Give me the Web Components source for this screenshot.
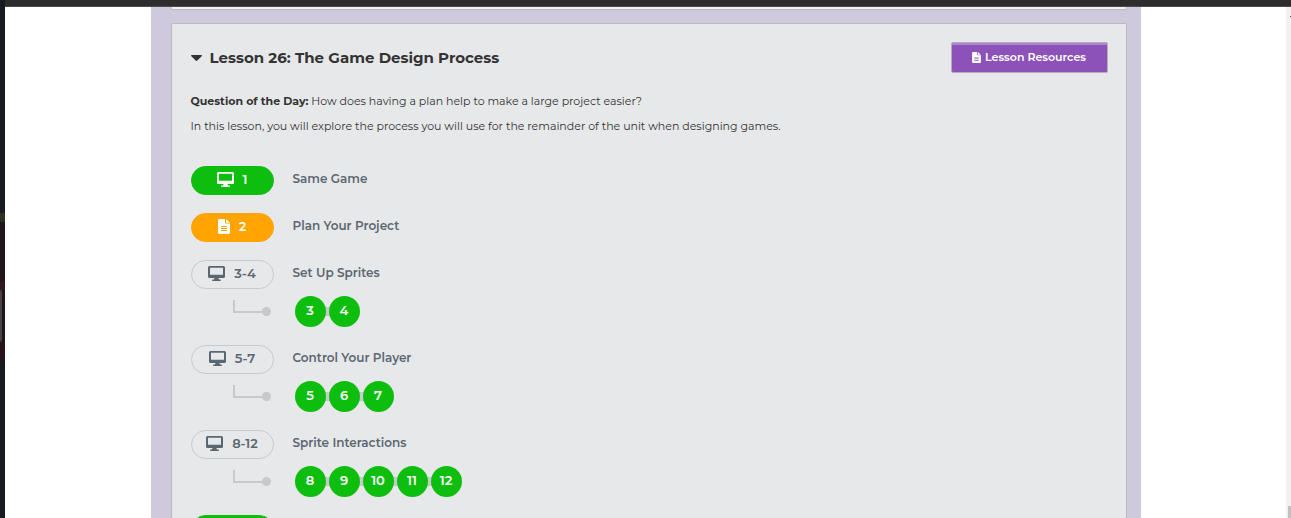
<!DOCTYPE html>
<html lang="en">
<head>
<meta charset="utf-8">
<title>Lesson 26: The Game Design Process</title>
<style>
html, body { margin: 0; height: 100%; overflow: hidden; }
body { --face: Montserrat, Inter, sans-serif; font-family: var(--face); color: #333; background: #fff; }
</style>
</head>
<body>
<course-window>
  <lesson-card partial></lesson-card>
  <lesson-card heading="Lesson 26: The Game Design Process">
    <p><strong>Question of the Day:</strong> How does having a plan help to make a large project easier?</p>
    <p>In this lesson, you will explore the process you will use for the remainder of the unit when designing games.</p>
    <level-row slot="levels" label="1" state="perfect" icon="screen" name="Same Game"></level-row>
    <level-row slot="levels" label="2" state="review" icon="page" name="Plan Your Project"></level-row>
    <level-row slot="levels" label="3-4" icon="screen" name="Set Up Sprites" bubbles="3 4"></level-row>
    <level-row slot="levels" label="5-7" icon="screen" name="Control Your Player" bubbles="5 6 7"></level-row>
    <level-row slot="levels" label="8-12" icon="screen" name="Sprite Interactions" bubbles="8 9 10 11 12"></level-row>
    <level-row slot="levels" state="perfect"></level-row>
  </lesson-card>
</course-window>

<script>
const define = (name, cls) => customElements.define(name, cls);

define('course-window', class extends HTMLElement {
  constructor() {
    super();
    this.attachShadow({ mode: 'open' }).innerHTML = `
      <style>
        :host { display: grid; grid-template-columns: 5px minmax(0, 1fr) 5px; grid-template-rows: 7px minmax(0, 1fr); height: 100vh; }
        .desktop { grid-row: 1 / 3; display: flex; flex-direction: column; background: #171b20; }
        .desktop i { display: block; }
        .sky { height: 213px; }
        .olive { height: 9px; background: #2b321f; }
        .wine { height: 59px; background: #21151c; }
        .rust { height: 9px; background: #30191b; }
        .tab { height: 52px; margin-right: 3px; border-radius: 0 3px 3px 0; background: #474146; }
        .shade { background: #21151c; }
        .shade.end { height: 20px; background: #26131b; }
        .bar { grid-column: 2 / 4; box-sizing: border-box; background: #2d2d2d; border-bottom: 1px solid #4d4a4c; }
        main { overflow: hidden; }
        .course { box-sizing: border-box; max-width: 990px; min-height: 100%; margin: 0 auto; padding: 0 14px 0 20px; background: #cfc9de; }
        .scroll { display: flex; flex-direction: column; justify-content: space-between; align-items: flex-end; background: #f1f1f1; }
        .scroll i { display: block; width: 1px; height: 1px; margin-top: 9px; background: #505050; }
        .scroll b { display: block; width: 3px; height: 12px; background: #c1c1c1; }
      </style>
      <div class="desktop"><i class="sky"></i><i class="olive"></i><i class="wine"></i><i class="rust"></i><div class="shade"><i class="tab"></i></div><i class="shade end"></i></div>
      <div class="bar"></div>
      <main><div class="course"><slot></slot></div></main>
      <div class="scroll"><i></i><b></b></div>`;
  }
});

const screenIcon = `<svg width="17" height="15" viewBox="0 0 17 15" aria-hidden="true"><path fill="currentColor" fill-rule="evenodd" d="M1.5 0h14A1.5 1.5 0 0 1 17 1.5v9a1.5 1.5 0 0 1-1.5 1.5H10.500l.4 1.500h1.400c.9 0 .9 1.500 0 1.500H4.700c-.9 0-.9-1.500 0-1.500h1.400l.4-1.500h-5A1.500 1.500 0 0 1 0 10.500v-9A1.500 1.500 0 0 1 1.500 0zM2 1.700v7h13v-7z"/></svg>`;
const pageIcon = (w, h) => `<svg width="${w}" height="${h}" viewBox="0 0 12 15" aria-hidden="true"><path fill="currentColor" fill-rule="evenodd" d="M1.500 0H7v3.500c0 .6.400 1 1 1h4v9c0 .8-.7 1.500-1.500 1.500h-9C.7 15 0 14.300 0 13.500v-12C0 .7.700 0 1.500 0zM3 7v1h6V7zm0 2v1h6V9zm0 2v1h6v-1zM8 0l4 3.700H8z"/></svg>`;

define('lesson-card', class extends HTMLElement {
  constructor() {
    super();
    this.attachShadow({ mode: 'open' });
  }
  connectedCallback() {
    const css = `
      <style>
        :host { display: block; background: #e7e8ea; border: 1px solid #bbb; border-radius: 2px; padding: 18px 18px 0 19px; }
        :host([partial]) { height: 2px; padding: 0; margin-bottom: 13px; border-top: 0; background: #f2f2f2; }
        header { display: flex; justify-content: space-between; align-items: center; height: 31px; }
        h2 { margin: 0; font-size: 15px; line-height: 24px; }
        .toggle { display: flex; align-items: center; gap: 8px; border: 0; padding: 0; background: none; color: #333; font: inherit; font-weight: 700; }
        .resources { display: flex; align-items: center; justify-content: center; gap: 4px; box-sizing: border-box; width: 157px; height: 31px; padding: 0 0 1px; border: 1px solid #b5acbd; border-radius: 2px; background: #8c52ba; box-shadow: inset 0 2px 0 #ae86cf; color: #fff; font: 600 11px/16px var(--face); }
        .text { margin: 16px 0 27px; }
        ::slotted(p) { margin: 0; font-size: 11px; line-height: 25px; }
      </style>`;
    this.shadowRoot.innerHTML = this.hasAttribute('partial') ? css : css + `
      <header>
        <h2><button class="toggle" aria-expanded="true"><svg width="11" height="6" viewBox="0 0 11 6" aria-hidden="true"><path fill="currentColor" d="M.7 0h9.600c.7 0 .9.700.4 1.200L6.300 5.600a1.100 1.100 0 0 1-1.600 0L.3 1.200C-.2.700 0 0 .7 0z"/></svg><span>${this.getAttribute('heading')}</span></button></h2>
        <button class="resources">${pageIcon(9, 11)}<span>Lesson Resources</span></button>
      </header>
      <div class="text"><slot></slot></div>
      <slot name="levels"></slot>`;
  }
});

define('level-row', class extends HTMLElement {
  constructor() {
    super();
    this.attachShadow({ mode: 'open' });
  }
  connectedCallback() {
    const get = key => this.getAttribute(key) || '';
    const icon = { screen: screenIcon, page: pageIcon(12, 15) }[get('icon')] || '';
    const bubbles = get('bubbles').split(' ').filter(Boolean);
    this.shadowRoot.innerHTML = `
      <style>
        :host { display: block; padding-bottom: 18px; }
        a { text-decoration: none; }
        .row, .sub { display: grid; grid-template-columns: 83px 1fr; }
        .row { column-gap: 19px; }
        .pill { display: flex; align-items: center; justify-content: center; gap: 9px; box-sizing: border-box; height: 29px; padding-bottom: 3px; border: 1px solid #c6cacd; border-radius: 15px; color: #5b6770; font-size: 13px; line-height: 18px; font-weight: 600; }
        :host([state]) .pill { color: #fff; }
        :host([state="perfect"]) .pill { background: #0ebe0e; border-color: #0ebe0e; }
        :host([state="review"]) .pill { background: #ffa400; border-color: #ffa400; }
        .name { color: #5b6770; font-size: 12px; line-height: 26px; font-weight: 600; }
        .sub { margin-top: 7px; column-gap: 21px; }
        .link { display: flex; align-items: flex-start; padding: 4px 0 0 42px; }
        .bubbles { display: flex; gap: 3px; width: max-content; background: linear-gradient(#c6cacd, #c6cacd) center / calc(100% - 20px) 9px no-repeat; }
        .bubble { display: block; box-sizing: border-box; width: 31px; height: 31px; border-radius: 50%; background: #0ebe0e; color: #fff; font-size: 13px; line-height: 29px; font-weight: 600; text-align: center; }
      </style>
      <div class="row">
        <a class="pill" href="#level">${icon}<span>${get('label')}</span></a>
        <span class="name">${get('name')}</span>
      </div>` + (bubbles.length ? `
      <div class="sub">
        <div class="link"><svg width="38" height="18" viewBox="0 0 38 18" aria-hidden="true"><path fill="none" stroke="#c6cacd" stroke-width="2" d="M1 0v12h32"/><circle cx="33.500" cy="11.500" r="4.500" fill="#c6cacd"/></svg></div>
        <div><div class="bubbles">${bubbles.map(n => `<a class="bubble" href="#level-${n}">${n}</a>`).join('')}</div></div>
      </div>` : '');
  }
});
</script>
</body>
</html>
